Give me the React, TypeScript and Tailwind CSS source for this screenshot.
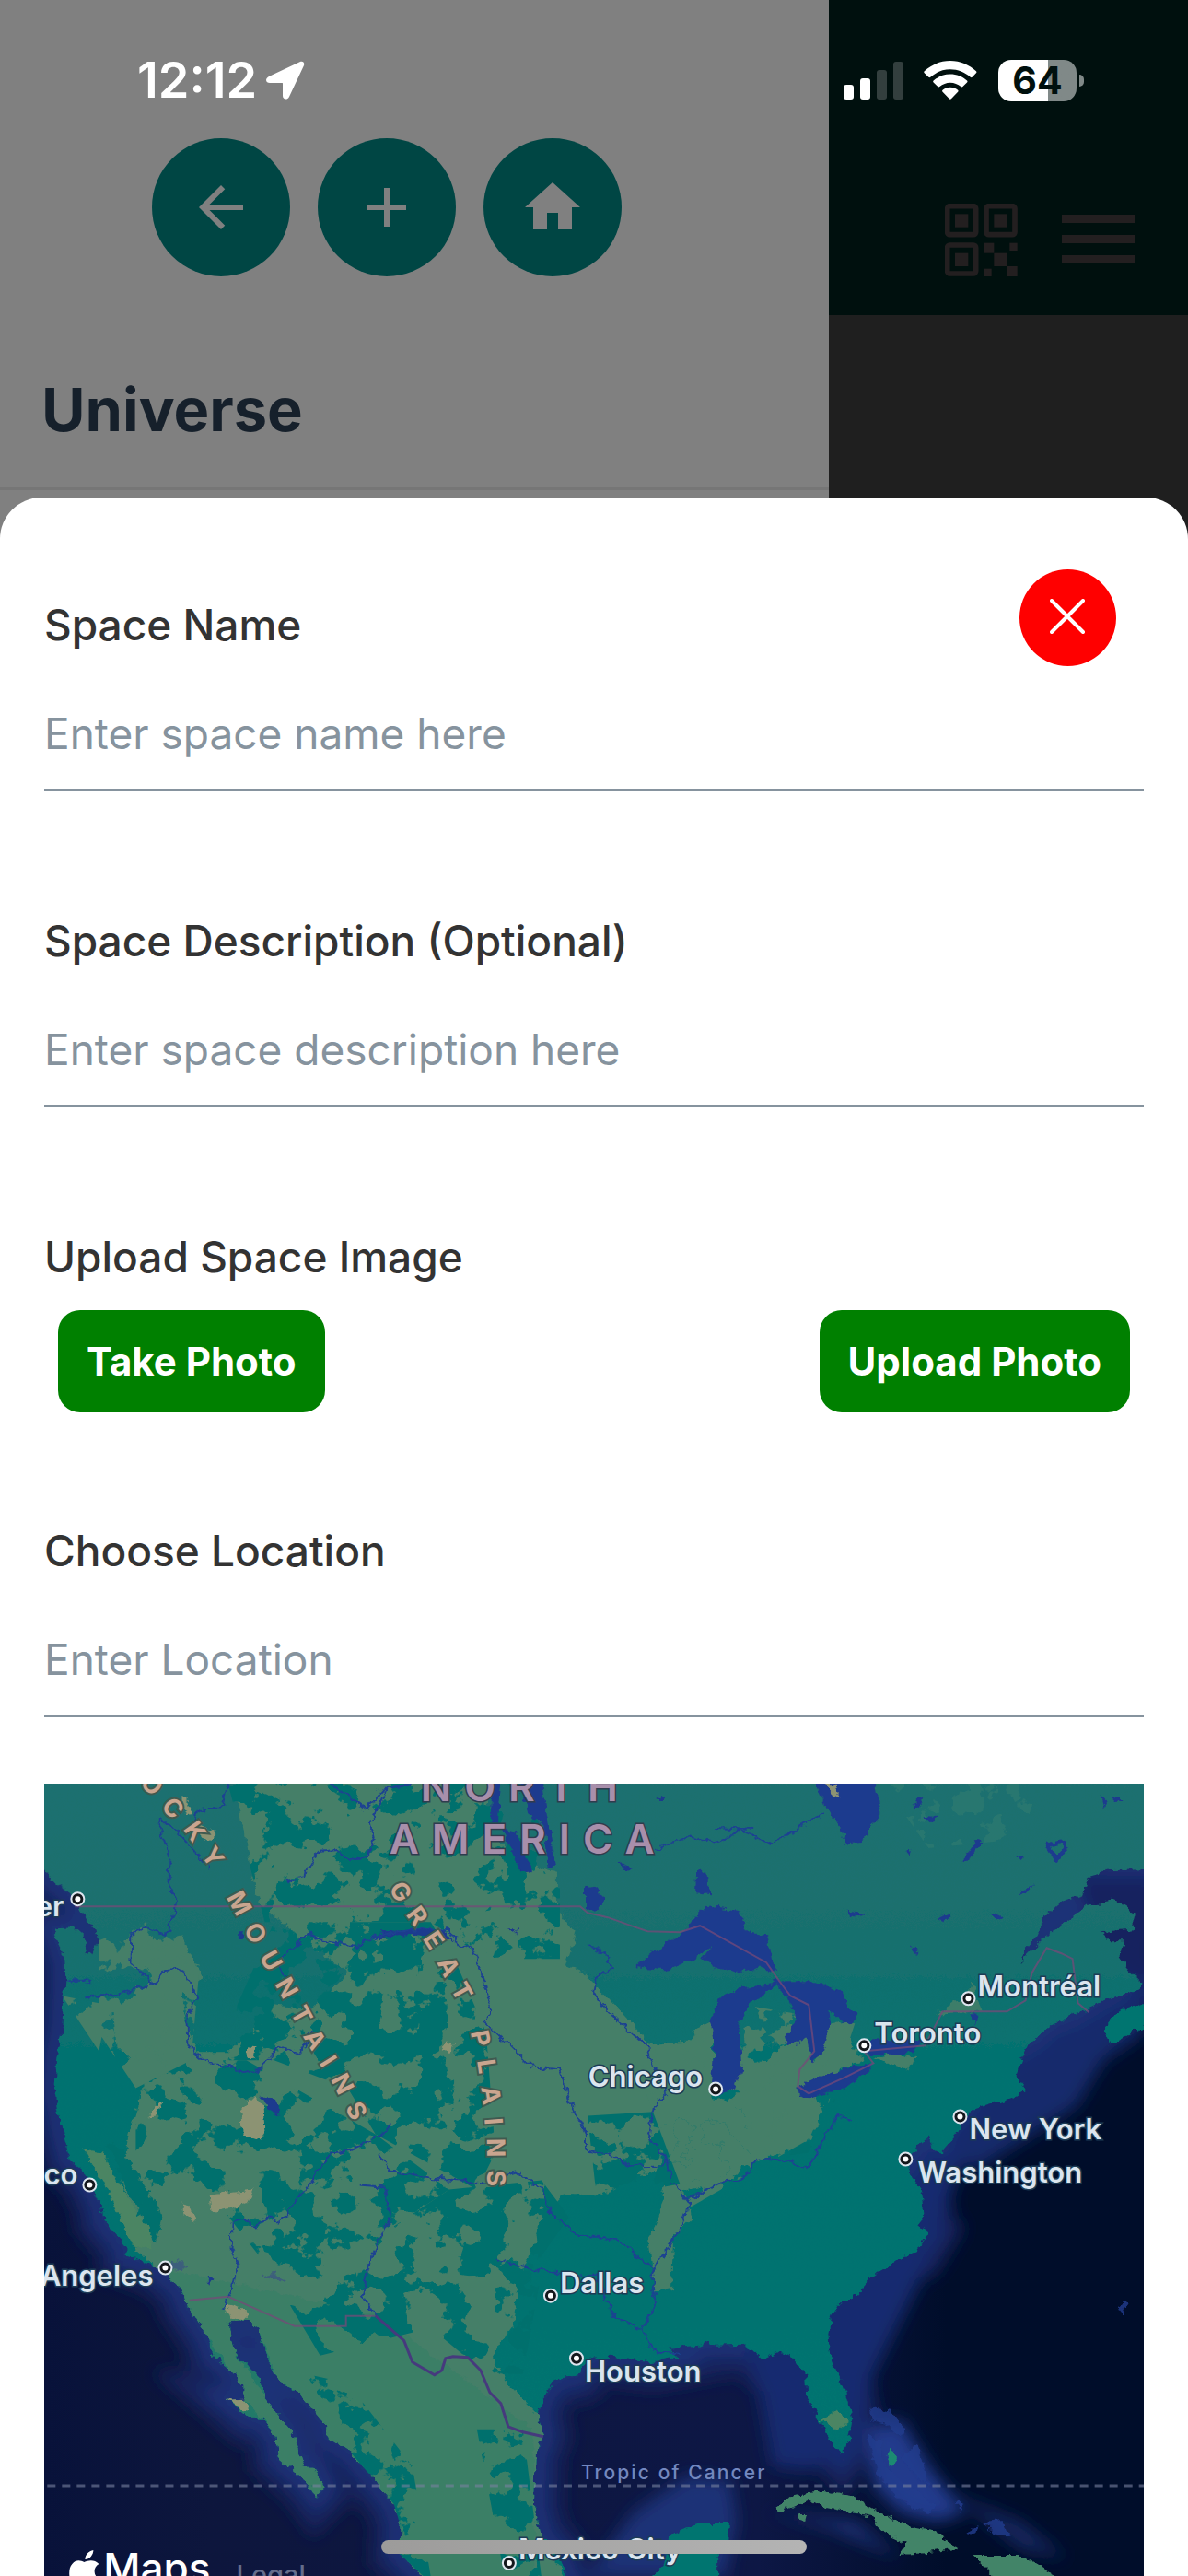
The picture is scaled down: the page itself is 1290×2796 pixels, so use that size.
import { useState } from "react";
import { MdAdd, MdArrowBack, MdHome } from "react-icons/md";

type City = { name: string; dot: [number, number]; label: [number, number]; end?: boolean };

const cities: City[] = [
  { name: "Vancouver", dot: [37, 125], label: [22, 144], end: true },
  { name: "San Francisco", dot: [50, 435], label: [37, 434], end: true },
  { name: "Los Angeles", dot: [132, 525], label: [119, 544], end: true },
  { name: "Chicago", dot: [729, 331], label: [715, 329], end: true },
  { name: "Toronto", dot: [890, 284], label: [901, 282] },
  { name: "Montréal", dot: [1003, 233], label: [1013, 231] },
  { name: "New York", dot: [994, 361], label: [1004, 386] },
  { name: "Washington", dot: [935, 407], label: [948, 432] },
  { name: "Dallas", dot: [550, 555], label: [560, 552] },
  { name: "Houston", dot: [578, 623], label: [587, 648] },
  { name: "Mexico City", dot: [505, 845], label: [515, 841] },
];

const mainland =
  "M-20 -20V85L0 92 12 107 32 121 43 141 55 157 58 172 53 184 45 186 49 171 32 156 10 157 22 191 23 214 20 264 14 297 12 334 20 374 28 407 47 424 63 457 65 474 89 501 89 512 122 524 150 547 156 567 178 601 184 621 202 634 217 651 217 667 198 667 221 687 233 687 253 707 255 731 285 757 296 772 304 764 293 741 283 741 269 701 257 687 239 664 237 647 221 631 206 614 200 584 217 581 233 592 241 621 251 642 269 657 283 667 308 697 306 707 332 724 358 754 380 781 387 804 385 834 415 862V880H575L567 860 557 834 540 817 532 784 534 727 542 707 536 684 542 664 555 646 581 641 592 622 616 621 635 624 663 627 689 622 677 612 711 609 722 604 728 609 758 608 772 616 780 624 798 616 809 619 827 641 828 667 843 691 849 707 865 726 873 714 877 691 869 657 853 621 851 597 855 577 865 561 879 557 900 534 928 514 948 507 960 487 948 477 956 467 950 437 940 424 936 414 948 394 960 384 966 397 972 401 987 384 995 367 1007 354 1031 347 1059 337 1066 331 1055 317 1062 297 1070 281 1094 261 1126 247 1153 234 1185 224 1194 217 1177 201 1167 187 1173 171 1157 171 1146 161 1181 157 1185 141 1161 126 1134 131 1106 151 1082 171 1059 194 1066 177 1078 164 1086 144 1106 127 1126 121 1134 101 1157 94 1214 93V-20Z";

const islands = [
  "M1214 237 1194 237 1165 247 1149 267 1157 284 1185 267 1214 255Z",
  "M661 880V860L673 847 677 814 711 802 744 802 742 821 730 837V880Z",
];

const caribbean = [
  "M796 784 813 771 845 767 877 772 908 791 936 804 964 809 993 829 960 834 928 836 936 824 908 811 900 794 869 789 845 784 829 776 798 790Z",
  "M1009 837 1062 837 1102 862V880H1031V860Z",
  "M820 792 828 792 826 800 820 799Z",
];

const greenLand =
  "M205 -20H510L472 31 490 60 518 85 557 97 557 137 577 164 567 197 585 204 604 224 635 257 659 284 700 280 712 262 726 257 726 304 722 340 742 344 770 321 790 292 815 278 829 282 835 302 845 290 852 262 869 257 878 285 890 300 860 310 829 321 842 346 845 355 833 384 790 402 762 414 742 431 695 441 703 471 683 491 681 547 663 551 657 497 667 467 677 421 640 425 604 447 565 444 546 464 534 497 520 530 514 554 510 587 486 621 506 654 536 684 542 707 534 727 532 784 540 817 575 880H415L385 834 387 804 358 754 332 724 306 707 283 667 251 642 233 592 217 581 200 584 206 614 239 664 269 701 293 741 304 764 296 772 255 731 253 707 217 667 202 634 178 601 156 567 150 547 122 524 100 505 98 470 85 430 92 380 104 340 99 304 79 284 75 244 100 228 119 212 110 194 84 200 88 170 105 158 130 172 150 166 172 210 150 222 152 251 166 291 202 291 225 270 250 240 290 245 330 205 270 160 235 130 222 80Z";

// Forest inside the green interior, thick in the mountains and thin elsewhere
const forest =
  "M250 150 420 150 450 200 480 270 490 400 470 440 360 380 330 330 250 300 200 300 210 240Z M440 440 540 430 570 470 520 540 430 530 380 480Z M590 360 760 350 770 420 600 450Z M238 440 330 490 350 580 300 560 250 500Z";

const thinForest =
  "M200 0H520L560 100 560 190 480 190 420 150 240 150Z M100 300 220 300 360 380 440 440 380 480 430 530 540 530 520 640 480 640 420 590 300 620 240 520 170 430 100 470Z M285 640 330 650 400 740 420 860 390 860 330 720Z M470 700 520 700 540 860 500 860Z M670 300 860 340 830 400 680 420Z";

const greenSpots =
  "M60 170 110 150 170 190 160 300 100 330 60 270Z M640 300 760 240 880 260 840 380 700 460Z M20 230 70 240 60 290Z";

const lakes = [
  "M643 199 663 181 691 164 715 137 722 132 754 139 762 161 784 164 790 191 796 204 778 199 750 206 730 201 715 191 724 177 703 192 675 202Z",
  "M722 257 732 234 758 221 798 216 790 224 766 237 754 264 758 304 750 331 734 337 724 321 728 284Z",
  "M790 214 837 214 865 224 872 240 883 251 873 261 851 246 853 262 845 294 833 301 829 277 807 284 804 274 817 261 807 231Z",
  "M815 331 845 317 870 308 900 304 896 311 869 331 829 342Z",
  "M883 287 898 277 956 277 944 291 892 294Z",
  "M835 -10 849 27 869 54 867 66 887 64 896 47 908 34 900 -10Z",
  "M488 -10H496L492 41 486 39Z",
  "M514 -10H540L546 34 556 87 548 91 542 47 524 31Z",
  "M498 49 514 54 530 94 518 96 506 67Z",
  "M708 96 720 94 723 120 707 118Z",
  "M588 112 600 110 608 128 598 140 588 136Z",
  "M1012 60 1018 61 1002 86 995 84Z",
  "M872 136 884 140 892 142 884 144 876 142Z",
  "M970 146 984 139 986 144 976 149Z",
  "M1028 143 1036 141 1041 145 1034 149Z",
  "M940 22 954 15 952 22 944 28Z",
  "M954 35 970 36 960 41Z",
  "M935 73 942 71 940 80Z",
  "M1054 78 1064 79 1060 85Z",
  "M1058 117 1073 110 1064 120Z",
  "M624 84 640 93 632 96Z",
  "M665 18 675 13 673 18Z",
  "M940 176 948 178 946 185Z",
  "M1146 12 1154 20 1150 26Z",
  "M1162 14 1170 18 1162 20Z",
  "M1006 248 1012 248 1010 264Z",
  "M502 157 514 157 512 162Z",
  "M212 160 217 160 216 170 211 170Z",
  "M235 336 255 347 256 361 245 354Z",
  "M175 532 185 536 180 544Z",
  "M366 160 430 157 446 172 430 168 400 163 364 168Z",
];

const sand = [
  "M228 340 214 354 215 381 233 387 241 377 239 351Z",
  "M126 346 130 344 120 362 112 363Z",
  "M180 446 228 441 220 455 182 464Z",
  "M150 455 158 457 165 476 152 466Z",
  "M196 564 220 570 222 580 202 580Z",
  "M198 667 216 666 222 680 214 679Z",
  "M150 15 156 18 160 34 150 28Z",
  "M168 44 186 52 180 62 170 58Z",
  "M848 0 858 2 864 14 852 8Z",
  "M436 280 444 282 440 291 433 288Z",
  "M220 285 230 286 228 298 222 296Z",
];

const rivers = [
  "M200 -5 194 25 170 28 162 40 M180 92 150 58 128 37 125 48 137 80 136 112 145 128 132 165 112 156 95 164 94 195 105 202 118 217 130 203 150 201 166 230 156 255 157 285 178 303 195 304 215 313 237 309 255 284 278 294 290 268",
  "M45 231 80 229 118 218 M23 212 52 216",
  "M262 106 282 102 298 74 318 72 330 82 352 80 358 60 354 42 372 6 400 -2 M305 -6 350 29 366 8 395 0",
  "M265 218 256 190 290 162 300 170 340 176 362 165 400 158 440 158 450 176 466 180 478 215 486 245 478 258 500 278 530 307 560 310 570 345 588 380 588 398 612 402",
  "M375 368 373 378 330 398 312 400 290 430 262 470 254 476 244 470 228 480 218 472 204 476 203 505 211 520 204 550 194 570",
  "M365 400 376 420 425 428 480 432 M341 435 370 437 376 470 356 510 346 555 360 577",
  "M488 428 512 420 540 440 548 464 580 490 610 492 632 500 660 527",
  "M491 514 520 525 560 530 600 533 608 555 620 578 648 592",
  "M590 177 612 185 618 200 600 210 597 228 612 246 655 285 664 312 678 332 662 350 656 380 677 410 680 430 700 454 697 470 680 500 660 530 664 565 650 590 660 615 690 618",
  "M612 402 640 415 670 414 678 406 M700 450 735 432 756 430 775 405 810 410 830 416 842 392 862 360 876 366",
  "M664 72 700 56 730 64 756 50 790 66 828 42 846 32 M728 48 770 50",
];

const borders = [
  "M34 133H582L590 140 612 145 640 155 655 160 690 161 712 154 784 194 798 214 810 230 830 240 836 290 820 310 818 328 830 336 870 318 900 303 890 290 956 284 975 247H1045L1065 235 1072 205 1088 178 1104 184 1116 190 1122 238 1134 248",
  "M158 560 200 556 272 588H328V577H360",
];

const rioGrande = "M360 577 391 604 400 627 424 641 432 636 436 623 444 621 460 622 474 636 484 660 496 672 504 697 520 703 542 708";

function SpaceMap() {
  return (
    <svg
      viewBox="0 0 1194 859"
      preserveAspectRatio="xMidYMin slice"
      className="block h-full w-full font-['Inter',sans-serif]"
      role="img"
      aria-label="Map of North America"
    >
      <defs>
        <linearGradient id="sea" x1="0" x2="1" y1="0" y2="0">
          <stop offset="0" stopColor="#08123a" />
          <stop offset="0.15" stopColor="#0d163d" />
          <stop offset="0.65" stopColor="#0d1745" />
          <stop offset="0.82" stopColor="#000d2a" />
          <stop offset="1" stopColor="#000d2a" />
        </linearGradient>
        <linearGradient id="land" x1="0" x2="0" y1="0" y2="1">
          <stop offset="0" stopColor="#20706f" />
          <stop offset="0.2" stopColor="#196f6e" />
          <stop offset="0.34" stopColor="#06726f" />
          <stop offset="1" stopColor="#04746f" />
        </linearGradient>
        <filter id="soft" x="-20%" y="-20%" width="140%" height="140%">
          <feGaussianBlur stdDeviation="9" />
        </filter>
        <filter id="rough" x="-5%" y="-5%" width="110%" height="110%">
          <feTurbulence type="fractalNoise" baseFrequency="0.11" numOctaves="3" seed="4" />
          <feDisplacementMap in="SourceGraphic" scale="10" xChannelSelector="R" yChannelSelector="G" />
        </filter>
        <filter id="patches" x="0" y="0" width="100%" height="100%">
          <feTurbulence type="fractalNoise" baseFrequency="0.03" numOctaves="5" seed="11" />
          <feColorMatrix values="0 0 0 0 0  0 0 0 0 0  0 0 0 0 0  40 0 0 0 -18.6" />
          <feComposite in="SourceGraphic" operator="in" />
        </filter>
        <filter id="thin-patches" x="0" y="0" width="100%" height="100%">
          <feTurbulence type="fractalNoise" baseFrequency="0.03" numOctaves="5" seed="11" />
          <feColorMatrix values="0 0 0 0 0  0 0 0 0 0  0 0 0 0 0  40 0 0 0 -21.4" />
          <feComposite in="SourceGraphic" operator="in" />
        </filter>
        <clipPath id="shore">
          <path d={mainland} />
        </clipPath>
        <path id="rockies" d="M82 -24 93 -11 115 12 137 37 160 62 180 91 205 136 223 169 258 231 289 287 318 334 333 363 360 415" />
        <path id="plains" d="M374 113 383 129 403 156 420 182 436 213 451 240 460 262 466 284 472 313 477 347 481 400 482 480" />
      </defs>

      <rect width="1194" height="859" fill="url(#sea)" />

      {/* Continental shelf */}
      <g filter="url(#soft)" fill="#1b3077">
        <path d={mainland} fill="none" stroke="#12225a" strokeWidth="60" />
        <path d={mainland} fill="none" stroke="#1b3077" strokeWidth="26" />
        <path d="M758 600 776 660 790 740 830 745 880 720 900 640 950 540 1000 400 960 400 840 560Z" fill="#182c70" />
        <path d="M1060 300 1194 220V270L1150 300 1120 350 1010 420 980 390Z" fill="#182a6c" />
        <path d="M1120 100H1200V230L1150 190Z" fill="#13245e" />
        <path d="M590 860 640 790 700 750 745 755 752 800 740 860Z" />
        <path d="M894 700 930 690 960 740 1000 790 970 800 930 790 900 760Z" fill="#213a8c" />
        <path d="M782 790 830 795 880 800 930 840 850 806Z" />
        <path d="M985 770 1060 800 1110 840 1060 830Z" fill="#14265f" />
      </g>
      <g fill="#233c8e" opacity="0.8" filter="url(#rough)">
        <path d="M896 676 920 680 934 700 930 708 914 694 898 690Z" />
        <path d="M893 708 908 712 912 740 936 760 968 782 960 790 930 778 906 750Z" />
        <path d="M930 730 945 716 954 736 960 760 945 750Z" />
        <path d="M990 776 998 780 992 790Z M1020 800 1040 798 1046 815 1030 812Z M1000 812 1012 806 1010 814Z" />
        <path d="M1166 570 1172 560 1176 564 1170 575Z" />
      </g>

      <g filter="url(#rough)">
        <path d={mainland} fill="url(#land)" />
        {islands.map((d) => (
          <path key={d} d={d} fill="#05746f" />
        ))}
        {caribbean.map((d) => (
          <path key={d} d={d} fill="#438468" />
        ))}
        <path d="M916 722 920 720 926 736 920 741 915 733Z" fill="#1c8a72" />
        <g clipPath="url(#shore)">
          <path d={greenLand} fill="#447f68" />
          <path d="M100 520 200 540 360 575 530 700 534 880H280L80 540Z" fill="#367f66" opacity="0.6" />
          <path d="M44 396 64 400 92 450 118 490 116 506 95 500 74 450Z" fill="#4b8563" />
          <path d="M70 390 84 395 112 440 130 470 122 500 112 480 90 440Z" fill="#03706d" />
          <path d="M843 690 860 680 874 690 862 700Z" fill="#4b8563" />
          <path d="M966 250 990 236 1000 232 1008 215 1012 230 1018 246 980 250Z" fill="#3d7d69" />
          <path d="M900 298 925 290 945 298 940 310 920 304Z" fill="#447f68" />
        </g>
      </g>

      <g clipPath="url(#shore)">
        <path d={forest} fill="#04706d" filter="url(#patches)" />
        <path d={thinForest} fill="#04706d" filter="url(#thin-patches)" />
        <path d={greenSpots} fill="#447f68" filter="url(#patches)" />
        <path d="M910 0H1080L1060 60 960 70Z" fill="#2f7a70" opacity="0.7" filter="url(#thin-patches)" />
      </g>

      <g filter="url(#rough)">
        {lakes.map((d) => (
          <path key={d} d={d} fill="#1f3a8e" />
        ))}
        {sand.map((d) => (
          <path key={d} d={d} fill="#8c9373" />
        ))}
        <path d="M1089 66 1105 62 1108 72 1100 82 1092 76Z" fill="none" stroke="#1f3a8e" strokeWidth="4" />
        <path d="M238 533 252 530 262 540 250 539Z M140 516 156 522 150 528 138 526Z" fill="#3c5f7c" />
      </g>

      <g fill="none" stroke="#1d4391" strokeWidth="2" strokeLinejoin="round" filter="url(#rough)">
        {rivers.map((d) => (
          <path key={d} d={d} />
        ))}
      </g>
      <g fill="none" stroke="#754a78" strokeWidth="2" opacity="0.75">
        {borders.map((d) => (
          <path key={d} d={d} />
        ))}
      </g>
      <path d={rioGrande} fill="none" stroke="#463a7d" strokeWidth="3" />
      <path d="M4 761H1194" stroke="#78819f" strokeWidth="3" strokeDasharray="9 7" opacity="0.6" />

      {/* Region names */}
      <g fill="#a88fab" stroke="#2f3c4e" strokeWidth="3" paintOrder="stroke" className="text-[44px] font-semibold tracking-[14px]">
        <text x="409" y="19">NORTH</text>
        <text x="375" y="76">AMERICA</text>
      </g>
      <g fill="#c9a58f" stroke="#3f5a50" strokeWidth="4" paintOrder="stroke" className="text-[27px] font-bold tracking-[14px]">
        <text>
          <textPath href="#rockies">ROCKY MOUNTAINS</textPath>
        </text>
        <text>
          <textPath href="#plains">GREAT PLAINS</textPath>
        </text>
      </g>
      <text x="583" y="754" fill="#7388bf" className="text-[21px] font-medium tracking-widest">
        Tropic of Cancer
      </text>

      {cities.map((c) => (
        <g key={c.name}>
          <circle cx={c.dot[0]} cy={c.dot[1]} r="7" fill="#14171c" stroke="#dde5ee" strokeWidth="2" />
          <circle cx={c.dot[0]} cy={c.dot[1]} r="3" fill="#ffffff" />
          <text
            x={c.label[0]}
            y={c.label[1]}
            textAnchor={c.end ? "end" : "start"}
            fill="#dbe5ef"
            stroke="#1d3b55"
            strokeWidth="3"
            paintOrder="stroke"
            className="text-[31px] font-semibold"
          >
            {c.name}
          </text>
        </g>
      ))}

      {/* Attribution */}
      <path
        d="M54 831c0 5-4 10-9 10 0-5 4-9 9-10zM60 846c-7 4-6 13 1 17-2 6-6 12-10 12-3 0-4-2-7-2s-4 2-7 2c-7 0-13-22-6-29 4-5 9-4 13-2 5-2 11-3 16 2z"
        fill="#ffffff"
      />
      <text x="65" y="866" fill="#ffffff" className="text-[44px] font-medium">Maps</text>
      <text x="209" y="868" fill="#646d8c" className="text-[29px] font-medium">Legal</text>
    </svg>
  );
}

function StatusBar() {
  return (
    <div className="absolute inset-x-0 top-0 flex items-center justify-between pt-[60px] pr-[113px] pl-[149px] text-white">
      <div className="flex items-center gap-[10px]">
        <span className="text-[54px] leading-[54px] font-semibold">12:12</span>
        <svg viewBox="0 0 42 42" className="h-[42px] w-[42px]" fill="currentColor" aria-hidden="true">
          <path d="M37 1 3 17c-5 3-3 7 1 7h13c1 0 1 0 1 1v13c0 4 5 5 7 1L41 5c1-3-1-5-4-4z" />
        </svg>
      </div>
      <div className="flex items-center">
        <svg viewBox="0 0 65 41" className="h-[41px] w-[65px]" fill="currentColor" aria-hidden="true">
          <rect x="0" y="25" width="11" height="16" rx="3" />
          <rect x="18" y="18" width="11" height="23" rx="3" />
          <rect x="36" y="9" width="11" height="32" rx="3" opacity="0.2" />
          <rect x="54" y="0" width="11" height="41" rx="3" opacity="0.2" />
        </svg>
        <svg viewBox="0 0 173 127" className="ml-[22px] h-[42px] w-[58px]" fill="currentColor" aria-hidden="true">
          <path d="M86 0c33 0 62 13 85 34 2 2 2 4 0 6l-13 14c-2 2-4 2-6 0C134 37 111 28 86 28S39 37 21 54c-2 2-4 2-6 0L1 40c-2-2-2-4 0-6C24 13 53 0 86 0z" />
          <path d="M86 44c21 0 40 8 55 21 2 2 2 4 0 6l-14 14c-2 2-4 2-6 0-10-8-22-13-35-13s-25 5-35 13c-2 2-4 2-6 0L31 71c-2-2-2-4 0-6 15-13 34-21 55-21z" />
          <path d="M86 87c10 0 18 3 25 9 2 2 2 4 0 6l-22 23c-2 2-4 2-6 0L61 102c-2-2-2-4 0-6 7-6 15-9 25-9z" />
        </svg>
        <div className="ml-[23px] flex h-[45px] w-[85px] items-center justify-center rounded-[14px] bg-linear-to-r from-white from-64% to-[#808988] to-64%">
          <span className="text-[41px] leading-[45px] font-bold text-[#00100e]">64</span>
        </div>
        <div className="ml-[3px] h-[13px] w-[5px] rounded-r-full bg-[#808988]" />
      </div>
    </div>
  );
}

function QrIcon() {
  return (
    <svg viewBox="0 0 237 237" className="h-[79px] w-[79px]" fill="currentColor" aria-hidden="true">
      <g fill="none" stroke="currentColor" strokeWidth="17">
        <rect x="8" y="8" width="93" height="93" rx="8" />
        <rect x="135" y="8" width="93" height="93" rx="8" />
        <rect x="8" y="135" width="93" height="93" rx="8" />
      </g>
      <rect x="33" y="34" width="43" height="43" />
      <rect x="160" y="34" width="43" height="43" />
      <rect x="33" y="161" width="43" height="43" />
      <rect x="127" y="128" width="33" height="33" />
      <rect x="211" y="128" width="25" height="25" />
      <rect x="160" y="161" width="43" height="43" />
      <rect x="127" y="212" width="25" height="25" />
      <rect x="203" y="204" width="33" height="33" />
    </svg>
  );
}

const roundButton = "flex h-[150px] w-[150px] items-center justify-center rounded-full bg-[#004644] text-[#808080]";

function Backdrop() {
  return (
    <div className="absolute inset-0 flex">
      <div className="flex-1 bg-[#808080]">
        <div className="flex gap-[30px] pt-[150px] pl-[165px]">
          <button className={roundButton} aria-label="Back">
            <MdArrowBack size={72} />
          </button>
          <button className={roundButton} aria-label="Add space">
            <MdAdd size={72} />
          </button>
          <button className={roundButton} aria-label="Home">
            <MdHome size={72} />
          </button>
        </div>
        <h1 className="mt-[105px] border-b-3 border-[#767676] pb-[44px] pl-[45px] text-[65px] leading-[80px] font-bold text-[#16202b]">
          Universe
        </h1>
      </div>
      <div className="w-[390px] bg-[#1f1f1f]">
        <header className="flex h-[342px] items-end justify-end gap-[48px] bg-[#00100e] pr-[58px] pb-[42px] text-[#231f20]">
          <button aria-label="Scan QR code">
            <QrIcon />
          </button>
          <button aria-label="Menu" className="flex flex-col gap-[13px] pb-[14px]">
            <span className="h-[9px] w-[79px] bg-current" />
            <span className="h-[9px] w-[79px] bg-current" />
            <span className="h-[9px] w-[79px] bg-current" />
          </button>
        </header>
      </div>
    </div>
  );
}

type FieldProps = { id: string; label: string; placeholder: string; value: string; onChange: (v: string) => void };

function Field({ id, label, placeholder, value, onChange }: FieldProps) {
  return (
    <div className="flex flex-col gap-[28px]">
      <label htmlFor={id} className="text-[46px] leading-[60px] font-medium text-[#333333]">
        {label}
      </label>
      <input
        id={id}
        value={value}
        onChange={(e) => onChange(e.target.value)}
        placeholder={placeholder}
        className="h-[123px] w-full border-b-3 border-[#86939e] text-[46px] text-[#333333] outline-none placeholder:text-[#86939e]"
      />
    </div>
  );
}

const photoButton = "h-[111px] rounded-[24px] bg-[#008000] px-[31px] text-[42px] font-bold text-white";

export default function App() {
  const [name, setName] = useState("");
  const [description, setDescription] = useState("");
  const [location, setLocation] = useState("");

  return (
    <div className="relative flex h-screen flex-col overflow-hidden font-['Inter',sans-serif]">
      <Backdrop />
      <StatusBar />

      {/* Bottom sheet */}
      <div className="relative mt-[540px] flex min-h-0 flex-1 flex-col rounded-t-[45px] bg-white px-12 pt-[108px]">
        <button
          aria-label="Close"
          className="absolute top-[78px] right-[78px] flex h-[105px] w-[105px] items-center justify-center rounded-full bg-[#ff0000]"
        >
          <svg viewBox="0 0 38 38" className="mr-[2px] mb-1 h-[38px] w-[38px]" stroke="#ffffff" strokeWidth="4" strokeLinecap="round" aria-hidden="true">
            <path d="M2 2 36 36M36 2 2 36" />
          </svg>
        </button>

        <form className="flex min-h-0 flex-1 flex-col" onSubmit={(e) => e.preventDefault()}>
          <div className="flex flex-col gap-[132px]">
            <Field id="space-name" label="Space Name" placeholder="Enter space name here" value={name} onChange={setName} />
            <Field
              id="space-description"
              label="Space Description (Optional)"
              placeholder="Enter space description here"
              value={description}
              onChange={setDescription}
            />
            <div className="flex flex-col gap-[28px]">
              <h2 className="text-[46px] leading-[60px] font-medium text-[#333333]">Upload Space Image</h2>
              <div className="flex justify-between px-[15px]">
                <button type="button" className={photoButton}>Take Photo</button>
                <button type="button" className={photoButton}>Upload Photo</button>
              </div>
            </div>
          </div>
          <div className="mt-[120px]">
            <Field id="location" label="Choose Location" placeholder="Enter Location" value={location} onChange={setLocation} />
          </div>
          <div className="mt-[72px] min-h-0 flex-1 overflow-hidden">
            <SpaceMap />
          </div>
        </form>
      </div>

      {/* Home indicator */}
      <div className="absolute inset-x-0 bottom-6 flex justify-center">
        <div className="h-[15px] w-[462px] rounded-full bg-linear-to-r from-[#9c9b9a] to-[#b4b4b4]" />
      </div>
    </div>
  );
}
